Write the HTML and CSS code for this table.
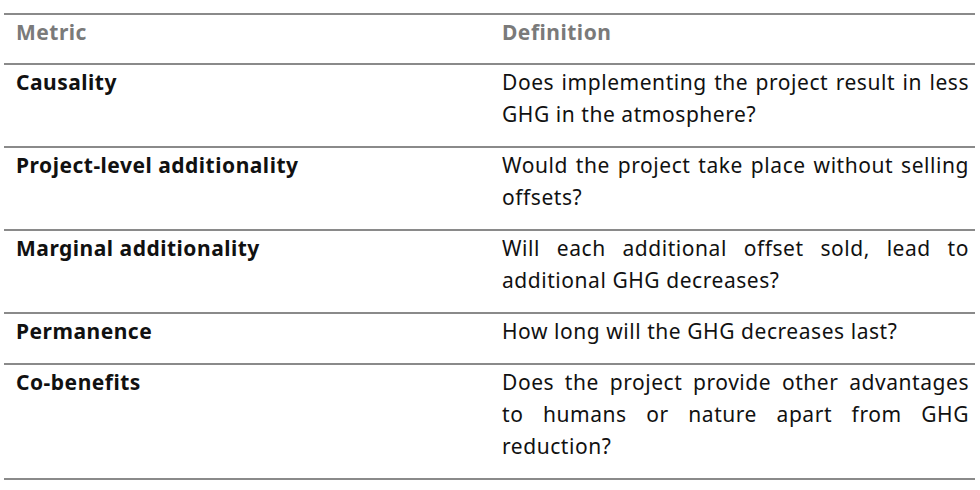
FILE: index.html
```html
<!DOCTYPE html>
<html lang="en">
<head>
<meta charset="utf-8">
<title>Metrics</title>
<link rel="stylesheet" href="styles.css">
</head>
<body>
<table class="metrics">
  <thead>
    <tr>
      <th class="col-metric">Metric</th>
      <th class="col-def">Definition</th>
    </tr>
  </thead>
  <tbody>
    <tr>
      <td class="col-metric">Causality</td>
      <td class="col-def">Does implementing the project result in less GHG in the atmosphere?</td>
    </tr>
    <tr>
      <td class="col-metric">Project-level additionality</td>
      <td class="col-def">Would the project take place without selling offsets?</td>
    </tr>
    <tr>
      <td class="col-metric">Marginal additionality</td>
      <td class="col-def">Will each additional offset sold, lead to additional GHG decreases?</td>
    </tr>
    <tr>
      <td class="col-metric">Permanence</td>
      <td class="col-def">How long will the GHG decreases last?</td>
    </tr>
    <tr>
      <td class="col-metric">Co-benefits</td>
      <td class="col-def">Does the project provide other advantages to humans or nature apart from GHG reduction?</td>
    </tr>
  </tbody>
</table>
</body>
</html>
```

FILE: styles.css
```css
html, body {
  margin: 0;
  padding: 0;
  background: #ffffff;
}

body {
  padding: 13px 5px 0 4px;
  font-family: "Noto Sans", "Lato", sans-serif;
  font-size: 21px;
  color: #111111;
}

.metrics {
  width: 971px;
  border-collapse: collapse;
  table-layout: fixed;
}

.metrics th,
.metrics td {
  border-top: 2px solid #8a8a8a;
  border-bottom: 2px solid #8a8a8a;
  padding: 1px 10px 16px 12px;
  line-height: 32px;
  vertical-align: top;
  text-align: left;
}

.metrics th {
  color: #7a7a7a;
  font-weight: 700;
  letter-spacing: 0.5px;
  padding-bottom: 15px;
}

.col-metric {
  width: 464px;
  font-weight: 700;
  letter-spacing: 0.5px;
}

.col-def {
  font-weight: 400;
  letter-spacing: 0.55px;
}

.metrics td.col-def {
  text-align: justify;
  padding-right: 6px;
}
```
